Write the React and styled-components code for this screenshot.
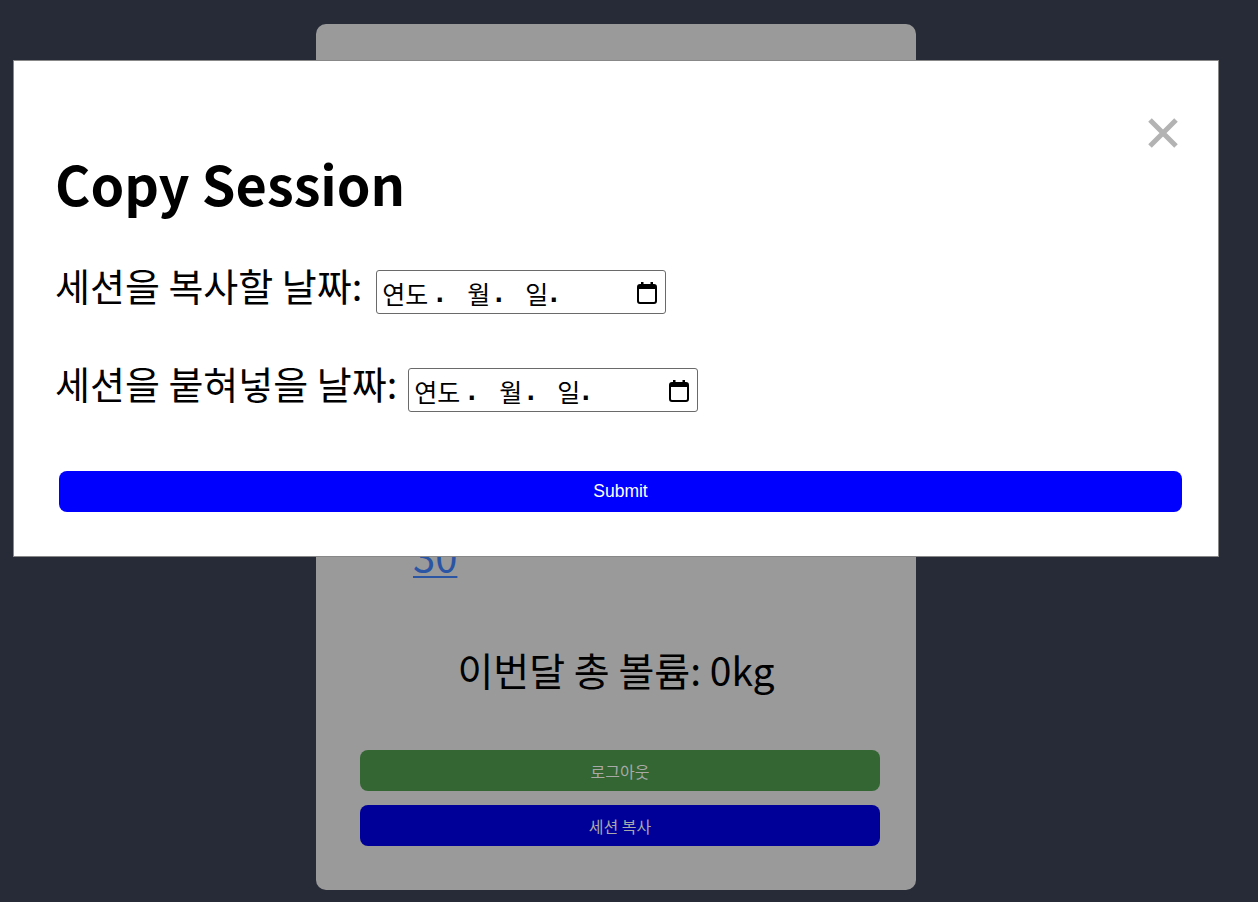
import React from "react";
import styled, { createGlobalStyle } from "styled-components";

const Global = createGlobalStyle`
  html, body { margin: 0; padding: 0; }
  body {
    background: #272b37;
    font-family: "Noto Sans CJK KR", "Noto Sans", sans-serif;
    min-height: 902px;
  }
`;

const Page = styled.div`
  position: relative;
  min-height: 902px;
  display: flex;
  justify-content: center;
  padding-top: 24px;
  box-sizing: border-box;
`;

const Card = styled.div`
  width: 600px;
  height: 866px;
  margin-left: -26px;
  background: #9a9a9a;
  border-radius: 10px;
  box-sizing: border-box;
  padding: 0 40px 44px 40px;
  display: flex;
  flex-direction: column;
`;

const CalendarArea = styled.div`
  flex: 1;
  display: flex;
  flex-direction: column;
  justify-content: flex-end;
  align-items: flex-start;
  padding-left: 57px;
`;

const DayLink = styled.a`
  font-size: 40px;
  line-height: 1;
  color: #2a55a5;
  text-decoration: underline;
  text-decoration-thickness: 2px;
  text-underline-offset: 4px;
  margin-bottom: 75px;
`;

const Volume = styled.div`
  font-size: 39px;
  color: #000;
  text-align: center;
  line-height: 1;
  margin-bottom: 61px;
`;

const ButtonStack = styled.div`
  display: flex;
  flex-direction: column;
  gap: 14px;
  width: 520px;
  margin-left: 4px;
`;

const CardButton = styled.button`
  height: 41px;
  border: none;
  border-radius: 8px;
  background: ${(p) => p.$bg};
  color: #a9a9a9;
  font-family: "Noto Sans CJK KR", sans-serif;
  font-size: 16px;
`;

const Modal = styled.div`
  position: absolute;
  left: 13px;
  top: 60px;
  width: 1206px;
  height: 497px;
  box-sizing: border-box;
  background: #fff;
  border: 1px solid #888;
  padding: 0 36px 0 41px;
  display: flex;
  flex-direction: column;
`;

const CloseRow = styled.div`
  display: flex;
  justify-content: flex-end;
  padding-top: 57px;
  margin-right: 4px;
  height: 30px;
`;

const CloseButton = styled.button`
  background: none;
  border: none;
  padding: 0;
  width: 30px;
  height: 30px;
  cursor: pointer;
  display: flex;
`;

const Title = styled.h2`
  margin: 8px 0 0;
  font-size: 54px;
  font-weight: 700;
  line-height: 1;
  color: #000;
`;

const Field = styled.label`
  display: flex;
  align-items: flex-start;
  gap: ${(p) => p.$gap}px;
  color: #000;
  height: 44px;
  margin-top: ${(p) => p.$mt}px;
`;

const LabelText = styled.span`
  font-size: 38px;
  line-height: 38px;
  margin-top: -4px;
  white-space: nowrap;
`;

const DateBox = styled.div`
  width: 290px;
  height: 44px;
  box-sizing: border-box;
  border: 1px solid #6a6a6a;
  border-radius: 3px;
  display: flex;
  align-items: center;
  padding: 0 8px 0 5px;
  font-size: 25px;
  line-height: 1;
`;

const Seg = styled.span`
  font-family: "Noto Sans CJK KR", sans-serif;
  display: inline-block;
  white-space: nowrap;
  width: ${(p) => p.$w}px;
  padding-top: 2px;
`;

const Dot = styled.span`
  font-family: "DejaVu Sans Mono", monospace;
  font-weight: 700;
  width: ${(p) => p.$w}px;
  display: inline-block;
  padding-top: 2px;
`;

const Spacer = styled.div`
  flex: 1;
`;

const Submit = styled.button`
  margin-top: 59px;
  margin-left: 4px;
  height: 41px;
  border: none;
  border-radius: 8px;
  background: #0000ff;
  color: #fff;
  font-family: "Liberation Sans", Arial, sans-serif;
  font-size: 17.5px;
`;

const CalIcon = () => (
  <svg width="20" height="23" viewBox="0 0 20 23">
    <rect x="1" y="4" width="18" height="18" rx="2" fill="none" stroke="#000" strokeWidth="2" />
    <rect x="1" y="4" width="18" height="4" fill="#000" />
    <rect x="4" y="1" width="2.5" height="4" fill="#000" />
    <rect x="13.5" y="1" width="2.5" height="4" fill="#000" />
  </svg>
);

const CloseIcon = () => (
  <svg width="30" height="30" viewBox="0 0 30 30">
    <path d="M2 2 L28 28 M28 2 L2 28" stroke="#b3b3b3" strokeWidth="5" />
  </svg>
);

const DateInput = () => (
  <DateBox>
    <Seg $w={50}>연도</Seg>
    <Dot $w={35}>.</Dot>
    <Seg $w={24}>월</Seg>
    <Dot $w={34}>.</Dot>
    <Seg $w={21}>일</Seg>
    <Dot $w={20}>.</Dot>
    <Spacer />
    <CalIcon />
  </DateBox>
);

export default function App() {
  return (
    <>
      <Global />
      <Page>
        <Card>
          <CalendarArea>
            <DayLink href="#">30</DayLink>
          </CalendarArea>
          <Volume>이번달 총 볼륨: 0kg</Volume>
          <ButtonStack>
            <CardButton $bg="#336633">로그아웃</CardButton>
            <CardButton $bg="#000099">세션 복사</CardButton>
          </ButtonStack>
        </Card>
        <Modal>
          <CloseRow>
            <CloseButton aria-label="close">
              <CloseIcon />
            </CloseButton>
          </CloseRow>
          <Title>Copy Session</Title>
          <Field $mt={60} $gap={14}>
            <LabelText>세션을 복사할 날짜:</LabelText>
            <DateInput />
          </Field>
          <Field $mt={54} $gap={11}>
            <LabelText>세션을 붙혀넣을 날짜:</LabelText>
            <DateInput />
          </Field>
          <Submit>Submit</Submit>
        </Modal>
      </Page>
    </>
  );
}
